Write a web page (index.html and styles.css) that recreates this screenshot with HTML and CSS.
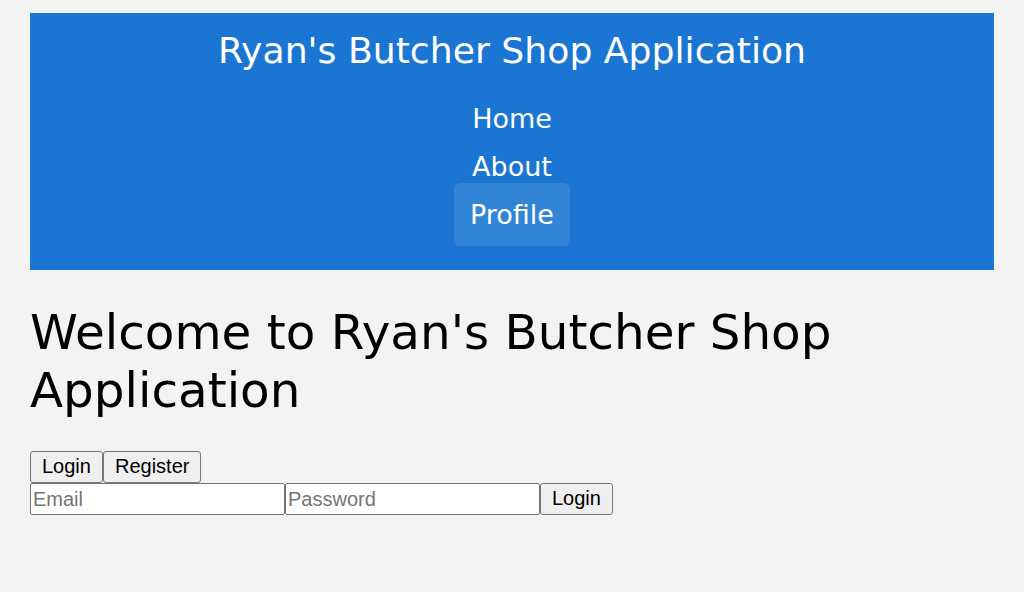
FILE: index.html
```html
<!DOCTYPE html>
<html lang="en">
<head>
<meta charset="utf-8">
<title>Ryan's Butcher Shop Application</title>
<link rel="stylesheet" href="styles.css">
</head>
<body>
<header class="site-header">
  <h1 class="site-title">Ryan's Butcher Shop Application</h1>
  <nav>
    <ul class="nav-list">
      <li><a class="nav-link" href="#">Home</a></li>
      <li><a class="nav-link" href="#">About</a></li>
      <li><a class="nav-link active" href="#">Profile</a></li>
    </ul>
  </nav>
</header>
<main class="content">
  <h1 class="welcome">Welcome to Ryan's Butcher Shop Application</h1>
  <div class="tabs">
    <button class="btn">Login</button><button class="btn">Register</button>
  </div>
  <form class="login-form">
    <input class="field" type="email" placeholder="Email"><input class="field" type="password" placeholder="Password"><button class="btn" type="button">Login</button>
  </form>
</main>
</body>
</html>
```
FILE: styles.css
```css
html, body {
  margin: 0;
  background: #f3f3f3;
}
body {
  padding: 13px 30px;
  font-family: "DejaVu Sans", sans-serif;
  color: #000;
}
.site-header {
  background: #1b76d3;
  color: #fff;
  text-align: center;
  padding: 17px 0 31px;
}
.site-title {
  margin: 0 0 23px;
  font-size: 36.2px;
  font-weight: normal;
  line-height: 42px;
}
.nav-list {
  list-style: none;
  margin: 0;
  padding: 0;
}
.nav-list li {
  line-height: 48px;
  font-size: 27px;
}
.nav-link {
  color: #fff;
  text-decoration: none;
  padding: 16px;
  border-radius: 6px;
}
.nav-link.active {
  background: rgba(255, 255, 255, 0.1);
}
.welcome {
  margin: 33px 0 32px;
  font-size: 48.4px;
  line-height: 58px;
  font-weight: normal;
}
.tabs, .login-form {
  display: flex;
  margin: 0;
}
.btn {
  height: 32px;
  box-sizing: border-box;
  padding: 0 11px 1px;
  font-family: "Liberation Sans", Arial, sans-serif;
  font-size: 20px;
  color: #000;
  background: #efefef;
  border: 1px solid #767676;
  border-radius: 3px;
}
.field {
  width: 255px;
  height: 32px;
  box-sizing: border-box;
  padding: 1px 2px;
  font-family: "Liberation Sans", Arial, sans-serif;
  font-size: 20px;
  background: #fff;
  border: 1px solid #767676;
  border-radius: 2px;
}
.field::placeholder {
  color: #757575;
}
```
